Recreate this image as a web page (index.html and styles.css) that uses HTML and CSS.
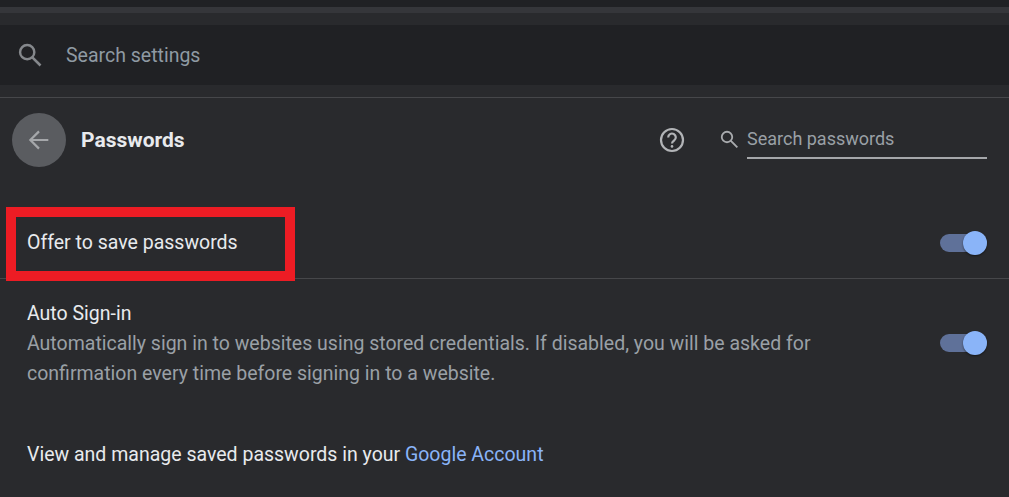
FILE: index.html
```html
<!DOCTYPE html>
<html lang="en">
<head>
<meta charset="utf-8">
<title>Passwords</title>
<link rel="stylesheet" href="styles.css">
</head>
<body>
<div class="chrome">
  <div class="strip-dark"></div>
  <div class="strip-light"></div>
  <div class="strip-mid"></div>
</div>
<header class="searchbar">
  <svg class="ic-search-main" viewBox="0 0 24 24" width="28" height="28"><circle cx="9.6" cy="9.6" r="6.1" fill="none" stroke="currentColor" stroke-width="2.1"/><path d="M14 14l7 7" stroke="currentColor" stroke-width="2.2" fill="none"/></svg>
  <span class="searchbar-text">Search settings</span>
</header>
<div class="gap-band"></div>
<main class="page">
  <div class="title-row">
    <button class="back" aria-label="Back">
      <svg viewBox="0 0 24 24" width="28" height="28"><path d="M20 12H5M12 4.6L4.6 12l7.4 7.4" fill="none" stroke="currentColor" stroke-width="1.9"/></svg>
    </button>
    <h1 class="title">Passwords</h1>
    <svg class="help" viewBox="0 0 26 26" width="26" height="26"><circle cx="13" cy="13" r="11" fill="none" stroke="currentColor" stroke-width="2.2"/><path d="M9.2 10.4a3.8 3.8 0 1 1 5.9 3.1c-1.3.9-2.1 1.5-2.1 3.1" fill="none" stroke="currentColor" stroke-width="2.2"/><circle cx="13" cy="19.4" r="1.3" fill="currentColor"/></svg>
    <svg class="ic-search-small" viewBox="0 0 24 24" width="20" height="20"><circle cx="9.6" cy="9.6" r="6.3" fill="none" stroke="currentColor" stroke-width="2.2"/><path d="M14 14l8 8" stroke="currentColor" stroke-width="2.3" fill="none"/></svg>
    <div class="pw-search">Search passwords</div>
  </div>
  <section class="row row-offer">
    <span class="label">Offer to save passwords</span>
    <span class="toggle"><span class="knob"></span></span>
  </section>
  <section class="row row-auto">
    <div class="auto-text">
      <div class="label">Auto Sign-in</div>
      <div class="desc">Automatically sign in to websites using stored credentials. If disabled, you will be asked for confirmation every time before signing in to a website.</div>
    </div>
    <span class="toggle toggle-raised"><span class="knob"></span></span>
  </section>
  <p class="manage">View and manage saved passwords in your <a class="link" href="#">Google Account</a></p>
  <div class="highlight"></div>
</main>
</body>
</html>
```
FILE: styles.css
```css
* { box-sizing: border-box; }
html, body { margin: 0; height: 100%; }
body {
  width: 1009px;
  height: 497px;
  overflow: hidden;
  background: #292a2d;
  font-family: Roboto, "Liberation Sans", sans-serif;
  color: #e8eaed;
}
.strip-dark { height: 7px; background: #202124; }
.strip-light { height: 6px; background: #35363a; }
.strip-mid { height: 12px; background: #292a2d; }
.searchbar {
  height: 60px;
  background: #202124;
  display: flex;
  align-items: center;
  padding-left: 16px;
}
.ic-search-main { color: #85888c; flex: none; }
.searchbar-text {
  margin-left: 22px;
  font-size: 19.5px;
  color: #8f9aa3;
}
.gap-band { height: 13px; border-bottom: 1px solid #46474a; }
.page { position: relative; }
.title-row {
  height: 82px;
  padding: 2px 0 0 12px;
  display: flex;
  align-items: center;
}
.back {
  width: 54px;
  height: 54px;
  padding: 0;
  border: 0;
  border-radius: 50%;
  background: #5a5c60;
  color: #a5a7aa;
  display: flex;
  align-items: center;
  justify-content: center;
  flex: none;
}
.title {
  margin: 0 0 0 15px;
  font-size: 21px;
  font-weight: 700;
  color: #e8eaed;
  width: 578px;
}
.help { color: #b2b4b7; flex: none; }
.ic-search-small { color: #a9abae; flex: none; margin: 0 0 2px 34px; }
.pw-search {
  margin-left: 8px;
  width: 240px;
  height: 38px;
  line-height: 36px;
  font-size: 18px;
  color: #9aa0a6;
  border-bottom: 2px solid #a5a7aa;
}
.row {
  display: flex;
  align-items: center;
  justify-content: space-between;
  padding: 0 22px 0 27px;
}
.row-offer { height: 99px; padding-top: 27px; border-bottom: 1px solid #46474a; }
.row-auto { height: 130px; }
.label { font-size: 19.5px; color: #e8eaed; line-height: 30px; }
.auto-text { width: 840px; }
.desc { font-size: 19.5px; line-height: 30px; color: #9aa0a6; }
.toggle {
  position: relative;
  width: 47px;
  height: 18px;
  border-radius: 9px;
  background: #5f7199;
  flex: none;
}
.toggle-raised { margin-bottom: 2px; }
.knob {
  position: absolute;
  right: 0;
  top: -3px;
  width: 24px;
  height: 24px;
  border-radius: 50%;
  background: #8ab4f8;
  box-shadow: 0 1px 2px rgba(0,0,0,.5);
}
.manage {
  margin: 31px 0 0 27px;
  font-size: 19.5px;
  line-height: 30px;
  color: #e8eaed;
}
.link { color: #8ab4f8; text-decoration: none; }
.highlight {
  position: absolute;
  left: 6px;
  top: 109px;
  width: 289px;
  height: 74px;
  border: 10px solid #ed1c24;
}
```
